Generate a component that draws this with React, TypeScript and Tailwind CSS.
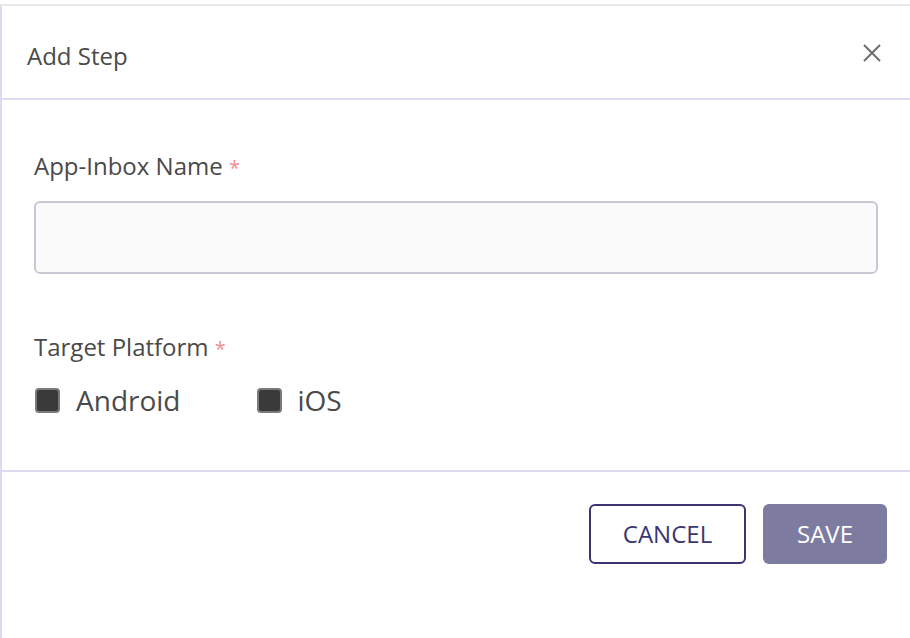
import React from "react";

function Checkbox({ label }: { label: string }) {
  return (
    <label className="flex items-center gap-[16px] h-[30px]">
      <span className="w-[25px] h-[25px] rounded-[4px] bg-[#3a3a3a] border-2 border-[#7a7a7a]" />
      <span className="text-[28px] text-[#4a4a4a] leading-[30px]">{label}</span>
    </label>
  );
}

export default function App() {
  return (
    <div className="w-[910px] h-[638px] bg-white pt-[4px] font-['Open_Sans',sans-serif]">
      <div className="h-[634px] border-t-2 border-[#e8e8e8]">
        <div className="h-full border-l-2 border-[#dcdcf0] flex flex-col">
          <div className="h-[94px] flex items-center justify-between pl-[25px] pr-[28px] border-b-2 border-[#dcdcf0]">
            <h1 className="text-[24px] text-[#4a4a4a] pt-[8px]">Add Step</h1>
            <svg width="20" height="20" viewBox="0 0 20 20" className="mt-[2px]">
              <path d="M2 2 L18 18 M18 2 L2 18" stroke="#6e6e6e" strokeWidth="2" />
            </svg>
          </div>
          <div className="px-[32px] pt-[51px] pb-[55px] border-b-2 border-[#dcdcf0]">
            <div className="h-[30px] text-[24px] text-[#4a4a4a] leading-[30px]">
              App-Inbox Name <span className="text-[20px] leading-none text-[#f09090]">*</span>
            </div>
            <input className="block mt-[20px] w-[844px] h-[73px] rounded-[6px] border-2 border-[#c9c9d6] bg-[#fafafa] outline-none" />
            <div className="mt-[58px] h-[30px] text-[24px] text-[#4a4a4a] leading-[30px]">
              Target Platform <span className="text-[20px] leading-none text-[#f09090]">*</span>
            </div>
            <div className="mt-[23px] flex items-center gap-[76px] pl-[1px]">
              <Checkbox label="Android" />
              <Checkbox label="iOS" />
            </div>
          </div>
          <div className="flex justify-end gap-[17px] pt-[32px] pr-[23px]">
            <button className="w-[157px] h-[60px] rounded-[6px] border-2 border-[#3a3570] text-[#3a3570] text-[24px]">
              CANCEL
            </button>
            <button className="w-[124px] h-[60px] rounded-[6px] bg-[#7e7ba0] text-white text-[24px]">
              SAVE
            </button>
          </div>
        </div>
      </div>
    </div>
  );
}
